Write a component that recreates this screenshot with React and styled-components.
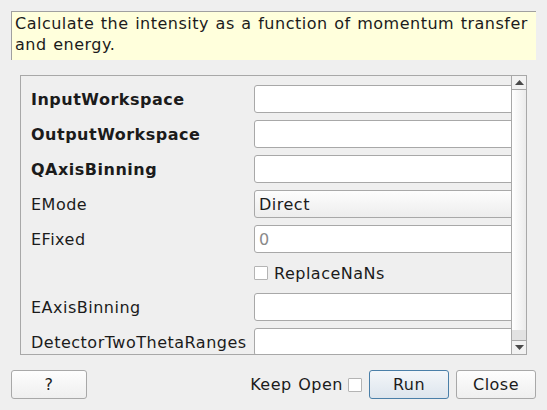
import React from 'react';
import styled, { createGlobalStyle } from 'styled-components';

const GlobalStyle = createGlobalStyle`
  html, body {
    margin: 0;
    padding: 0;
    background: #efefef;
  }
  body {
    font-family: "DejaVu Sans", "Noto Sans", sans-serif;
    font-size: 16px;
    letter-spacing: 0.5px;
    word-spacing: 1px;
    color: #1b1b1b;
  }
`;

const Dialog = styled.div`
  width: 547px;
  height: 410px;
  box-sizing: border-box;
  padding: 11px 11px 0 11px;
  display: flex;
  flex-direction: column;
`;

const Description = styled.div`
  height: 49px;
  box-sizing: border-box;
  width: 525px;
  background: #ffffdc;
  border-top: 1px solid #a0a0a0;
  border-left: 1px solid #a0a0a0;
  padding: 1px 3px;
  line-height: 21px;
`;

const ScrollArea = styled.div`
  margin: 15px 0 0 9px;
  width: 507px;
  height: 280px;
  box-sizing: border-box;
  border: 1px solid #a8a8a8;
  display: flex;
  overflow: hidden;
`;

const Viewport = styled.div`
  flex: 1;
  overflow: hidden;
  padding: 9px 0 0 10px;
  display: flex;
  flex-direction: column;
  gap: 7px;
`;

const Row = styled.div`
  display: flex;
  align-items: center;
  height: ${(p) => p.$h || 28}px;
  flex-shrink: 0;
`;

const Label = styled.div`
  width: 223px;
  flex-shrink: 0;
  font-weight: ${(p) => (p.$bold ? 'bold' : 'normal')};
  white-space: nowrap;
`;

const Field = styled.div`
  width: 280px;
  height: 28px;
  flex-shrink: 0;
  box-sizing: border-box;
  border: 1px solid #a8a8a8;
  border-radius: 3px;
  background: ${(p) => (p.$combo ? 'linear-gradient(#fdfdfd, #ededed)' : '#ffffff')};
  padding: 0 4px;
  display: flex;
  align-items: center;
  color: ${(p) => (p.$placeholder ? '#8a8a8a' : 'inherit')};
`;

const Check = styled.span`
  display: inline-block;
  width: 12px;
  height: 12px;
  border: 1px solid #b4b4b4;
  border-radius: 1px;
  background: #ffffff;
  flex-shrink: 0;
`;

const CheckLabel = styled.span`
  margin-left: 6px;
`;

const ScrollBar = styled.div`
  width: 14px;
  flex-shrink: 0;
  border-left: 1px solid #a8a8a8;
  display: flex;
  flex-direction: column;
`;

const Arrow = styled.div`
  height: 13px;
  flex-shrink: 0;
  background: #f2f2f2;
  display: flex;
  align-items: center;
  justify-content: center;
  border-${(p) => (p.$down ? 'top' : 'bottom')}: 1px solid #a8a8a8;
`;

const Handle = styled.div`
  height: 240px;
  flex-shrink: 0;
  background: linear-gradient(to right, #ffffff, #ebebeb);
`;

const Trough = styled.div`
  flex: 1;
  background: #e2e2e2;
`;

const Footer = styled.div`
  margin-top: 15px;
  display: flex;
  align-items: center;
  width: 525px;
`;

const Button = styled.button`
  width: ${(p) => p.$w || 80}px;
  height: 29px;
  margin-left: ${(p) => p.$gap || 0}px;
  box-sizing: border-box;
  border: 1px solid ${(p) => (p.$primary ? '#4a7fa8' : '#a8a8a8')};
  border-radius: 3px;
  background: ${(p) =>
    p.$primary ? 'linear-gradient(#f3f6f9, #dde5ed)' : 'linear-gradient(#fdfdfd, #efefef)'};
  font-family: inherit;
  font-size: 16px;
  letter-spacing: inherit;
  color: #1b1b1b;
  padding: 0;
`;

const Spacer = styled.div`
  flex: 1;
`;

const KeepOpen = styled.span`
  margin-right: 5px;
`;

const Triangle = ({ down }) => (
  <svg width="9" height="5" viewBox="0 0 9 5">
    <path d={down ? 'M0 0 L9 0 L4.5 5 Z' : 'M0 5 L9 5 L4.5 0 Z'} fill="#4a4a4a" />
  </svg>
);

const rows = [
  { label: 'InputWorkspace', bold: true },
  { label: 'OutputWorkspace', bold: true },
  { label: 'QAxisBinning', bold: true },
  { label: 'EMode', value: 'Direct', combo: true },
  { label: 'EFixed', value: '0', placeholder: true },
  { check: 'ReplaceNaNs' },
  { label: 'EAxisBinning' },
  { label: 'DetectorTwoThetaRanges' },
];

export default function App() {
  return (
    <>
      <GlobalStyle />
      <Dialog>
        <Description>
          Calculate the intensity as a function of momentum transfer and energy.
        </Description>
        <ScrollArea>
          <Viewport>
            {rows.map((r, i) =>
              r.check ? (
                <Row key={i} $h={26}>
                  <Label />
                  <Check />
                  <CheckLabel>{r.check}</CheckLabel>
                </Row>
              ) : (
                <Row key={i}>
                  <Label $bold={r.bold}>{r.label}</Label>
                  <Field $combo={r.combo} $placeholder={r.placeholder}>
                    {r.value}
                  </Field>
                </Row>
              )
            )}
          </Viewport>
          <ScrollBar>
            <Arrow>
              <Triangle />
            </Arrow>
            <Handle />
            <Trough />
            <Arrow $down>
              <Triangle down />
            </Arrow>
          </ScrollBar>
        </ScrollArea>
        <Footer>
          <Button $w={76}>?</Button>
          <Spacer />
          <KeepOpen>Keep Open</KeepOpen>
          <Check />
          <Button $primary $gap={7}>Run</Button>
          <Button $gap={7}>Close</Button>
        </Footer>
      </Dialog>
    </>
  );
}
